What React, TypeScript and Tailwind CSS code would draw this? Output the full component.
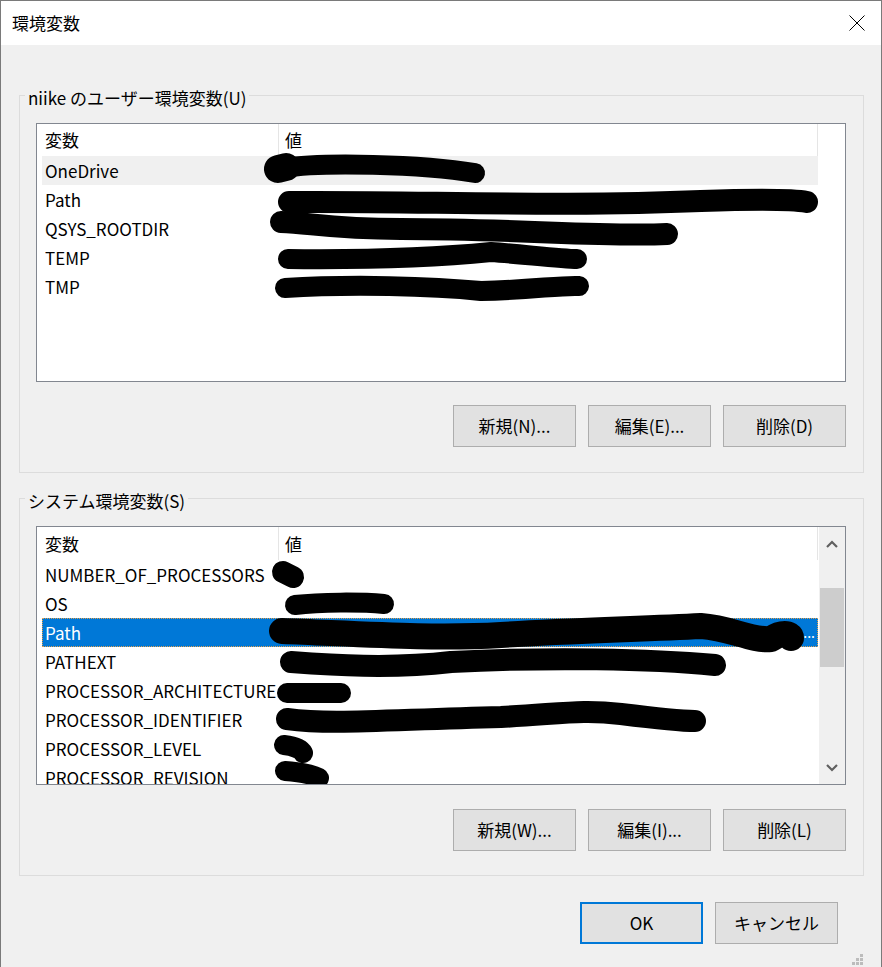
import React from "react";

const userVars = ["OneDrive", "Path", "QSYS_ROOTDIR", "TEMP", "TMP"];
const sysVars = [
  "NUMBER_OF_PROCESSORS",
  "OS",
  "Path",
  "PATHEXT",
  "PROCESSOR_ARCHITECTURE",
  "PROCESSOR_IDENTIFIER",
  "PROCESSOR_LEVEL",
  "PROCESSOR_REVISION",
];

// redaction marks, page coordinates
const userMarks = [
  { d: "M277 168 L285 166", w: 28 },
  { d: "M282 167 C 320 161, 420 163, 474 172", w: 20 },
  { d: "M288 201 C 420 200, 560 206, 700 200 C 760 198, 790 198, 806 201", w: 22 },
  { d: "M280 221 C 310 222, 330 228, 400 228 C 520 228, 600 236, 666 233", w: 22 },
  { d: "M287 258 C 380 259, 440 256, 490 251 C 520 253, 560 258, 576 258", w: 20 },
  { d: "M284 287 C 350 283, 430 285, 480 290 C 530 289, 560 284, 578 285", w: 20 },
];

const sysMarks = [
  { d: "M282 571 L292 576", w: 22 },
  { d: "M294 604 C 320 601, 360 601, 383 603", w: 20 },
  {
    d: "M281 630 C 360 633, 430 638, 500 634 C 560 630, 640 628, 700 625 C 730 627, 750 640, 770 638 C 780 631, 790 632, 790 637",
    w: 26,
  },
  { d: "M290 661 C 330 664, 390 668, 450 661 C 550 656, 650 658, 714 664", w: 22 },
  { d: "M286 692 L340 692", w: 20 },
  {
    d: "M286 718 C 330 724, 380 719, 500 716 C 560 713, 580 708, 620 713 C 660 718, 680 720, 694 720",
    w: 22,
  },
  { d: "M283 744 C 292 745, 300 748, 302 752", w: 20 },
  { d: "M284 770 C 300 771, 312 774, 318 777", w: 20 },
];

function Marks({ marks, ox, oy }: { marks: { d: string; w: number }[]; ox: number; oy: number }) {
  return (
    <svg className="absolute inset-0 pointer-events-none" width="810" height="259">
      <g transform={`translate(${-ox} ${-oy})`}>
        {marks.map((m, i) => (
          <path
            key={i}
            d={m.d}
            fill="none"
            stroke="#000"
            strokeWidth={m.w}
            strokeLinecap="round"
            strokeLinejoin="round"
          />
        ))}
      </g>
    </svg>
  );
}

function Header({ h }: { h: string }) {
  return (
    <div className={`shrink-0 flex ml-[5px] w-[776px] ${h}`}>
      <div className="w-[237px] border-r border-[#e5e5e5] pl-[3px] flex items-center">変数</div>
      <div className="flex-1 border-r border-[#e5e5e5] pl-[6px] flex items-center">値</div>
    </div>
  );
}

function VarList({
  names,
  hover,
  selected,
  scroll,
  marks,
  oy,
  headerH,
}: {
  names: string[];
  hover?: number;
  selected?: number;
  scroll?: boolean;
  marks: { d: string; w: number }[];
  oy: number;
  headerH: string;
}) {
  return (
    <div className="relative h-[259px] border border-[#828790] bg-white flex overflow-hidden">
      <div className="flex-1 flex flex-col overflow-hidden">
        <Header h={headerH} />
        {names.map((n, i) => {
          const sel = i === selected;
          const hov = i === hover;
          return (
            <div
              key={n}
              className={
                sel
                  ? "shrink-0 ml-[5px] w-[776px] h-[29px] flex items-center bg-[#0078d7] text-white border border-dotted border-[#e0a050]"
                  : hov
                  ? "shrink-0 ml-[5px] w-[776px] h-[29px] flex items-center bg-[#f0f0f0]"
                  : "shrink-0 ml-[5px] w-[776px] h-[29px] flex items-center"
              }
            >
              <div className={sel ? "w-[235px] pl-[2px] whitespace-nowrap" : "w-[237px] pl-[3px] whitespace-nowrap"}>
                {n}
              </div>
              {sel && <div className="flex-1 text-right pr-[2px] text-[14px]">...</div>}
            </div>
          );
        })}
      </div>
      {scroll ? (
        <div className="w-[26px] bg-[#f0f0f0] flex flex-col">
          <div className="h-[33px] flex items-center justify-center">
            <svg width="12" height="8" viewBox="0 0 12 8">
              <path d="M1 7 L6 2 L11 7" fill="none" stroke="#606060" strokeWidth="2.2" />
            </svg>
          </div>
          <div className="flex-1 px-[1px]">
            <div className="mt-[28px] h-[79px] bg-[#cdcdcd]" />
          </div>
          <div className="h-[33px] flex items-center justify-center">
            <svg width="12" height="8" viewBox="0 0 12 8">
              <path d="M1 1 L6 6 L11 1" fill="none" stroke="#606060" strokeWidth="2.2" />
            </svg>
          </div>
        </div>
      ) : (
        <div className="w-[26px]" />
      )}
      <Marks marks={marks} ox={36} oy={oy} />
    </div>
  );
}

function Btn({ label, primary }: { label: string; primary?: boolean }) {
  return (
    <div
      className={
        primary
          ? "w-[123px] h-[42px] flex items-center justify-center bg-[#e1e1e1] border-2 border-[#0078d7]"
          : "w-[123px] h-[42px] flex items-center justify-center bg-[#e1e1e1] border border-[#adadad]"
      }
    >
      {label}
    </div>
  );
}

function Group({ title, children }: { title: string; children: React.ReactNode }) {
  return (
    <div className="border border-[#dcdcdc]">
      <div className="-mt-[8px] ml-[5px] w-fit h-[20px] leading-[20px] px-[3px] bg-[#f0f0f0]">{title}</div>
      <div className="mt-[15px] pl-[16px] pr-[17px]">{children}</div>
    </div>
  );
}

export default function App() {
  return (
    <div className="w-[882px] h-[967px] bg-[#f0f0f0] border-t border-r border-l border-[#7a7a7a] text-[17px] text-black font-['Noto_Sans_CJK_JP',sans-serif] flex flex-col">
      {/* title bar */}
      <div className="h-[44px] bg-white flex items-center justify-between pl-[11px] pr-[16px]">
        <span>環境変数</span>
        <svg width="16" height="16" viewBox="0 0 16 16">
          <path d="M0.5 0.5 L15.5 15.5 M15.5 0.5 L0.5 15.5" stroke="#000" strokeWidth="1" />
        </svg>
      </div>

      <div className="flex-1 flex flex-col pl-[18px] pr-[17px] pt-[50px]">
        <Group title="niike のユーザー環境変数(U)">
          <VarList names={userVars} hover={0} marks={userMarks} oy={123} headerH="h-[32px]" />
          <div className="flex justify-end gap-[12px] mt-[23px] mb-[25px]">
            <Btn label="新規(N)..." />
            <Btn label="編集(E)..." />
            <Btn label="削除(D)" />
          </div>
        </Group>

        <div className="mt-[25px]">
          <Group title="システム環境変数(S)">
            <VarList
              names={sysVars}
              selected={2}
              scroll
              marks={sysMarks}
              oy={526}
              headerH="h-[33px]"
            />
            <div className="flex justify-end gap-[12px] mt-[24px] mb-[24px]">
              <Btn label="新規(W)..." />
              <Btn label="編集(I)..." />
              <Btn label="削除(L)" />
            </div>
          </Group>
        </div>

        <div className="flex justify-end gap-[12px] mt-[26px] pr-[26px]">
          <Btn label="OK" primary />
          <Btn label="キャンセル" />
        </div>

        <div className="flex-1 flex items-end justify-end pb-[2px] pr-[1px]">
          <svg width="11" height="11" viewBox="0 0 11 11">
            <rect x="8" y="0" width="3" height="3" fill="#bcbcbc" />
            <rect x="4" y="4" width="3" height="3" fill="#bcbcbc" />
            <rect x="8" y="4" width="3" height="3" fill="#bcbcbc" />
            <rect x="0" y="8" width="3" height="3" fill="#bcbcbc" />
            <rect x="4" y="8" width="3" height="3" fill="#bcbcbc" />
            <rect x="8" y="8" width="3" height="3" fill="#bcbcbc" />
          </svg>
        </div>
      </div>
    </div>
  );
}
